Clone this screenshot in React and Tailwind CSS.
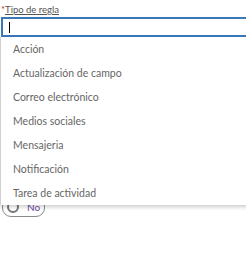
import React from "react";

const OPTIONS = [
  "Acción",
  "Actualización de campo",
  "Correo electrónico",
  "Medios sociales",
  "Mensajeria",
  "Notificación",
  "Tarea de actividad",
];

export default function App() {
  return (
    <div className="relative h-[257px] w-[246px] overflow-hidden bg-white font-['Lato',sans-serif] text-[#444]">
      {/* Label */}
      <div className="flex h-[17px] items-start pl-[1px] pt-[4px] text-[9.5px] leading-[11px]">
        <span className="text-[#c0392b]">*</span>
        <span className="text-[#555] underline">Tipo de regla</span>
      </div>

      {/* Input */}
      <div className="ml-[1px] flex h-[20px] w-[260px] items-center border-2 border-[#3a78b8] pl-[6px]">
        <span className="h-[11px] w-[1px] bg-black" />
      </div>

      {/* Toggle partly under the list */}
      <div className="mt-[160px] ml-[2px] flex h-[20px] w-[43px] items-center gap-[8px] rounded-[9px] border border-[#8a8a8a] pl-[4px]">
        <span className="h-[12px] w-[12px] rounded-full border-2 border-[#777]" />
        <span className="mt-[1px] text-[10px] text-[#6b4c9a]">No</span>
      </div>

      {/* Dropdown list */}
      <ul className="absolute left-0 top-[37px] w-[260px] border-l border-[#d0d0d0] bg-white shadow-[0_2px_4px_rgba(0,0,0,0.2)]">
        {OPTIONS.map((o) => (
          <li key={o} className="flex h-[24px] items-center pl-[12px] pt-[2px] text-[10.5px] text-[#666]">
            {o}
          </li>
        ))}
      </ul>
    </div>
  );
}
